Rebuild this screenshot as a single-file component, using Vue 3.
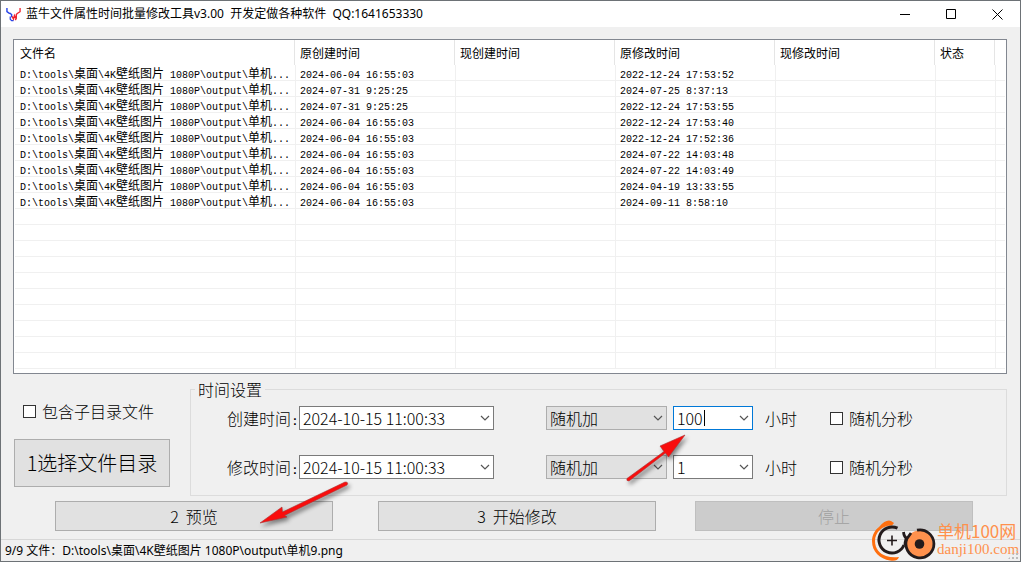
<script setup>
import { ref } from 'vue'

const columns = ['文件名', '原创建时间', '现创建时间', '原修改时间', '现修改时间', '状态', '']

const path = 'D:\\tools\\桌面\\4K壁纸图片 1080P\\output\\单机...'
const times = [
  ['2024-06-04 16:55:03', '2022-12-24 17:53:52'],
  ['2024-07-31 9:25:25', '2024-07-25 8:37:13'],
  ['2024-07-31 9:25:25', '2022-12-24 17:53:55'],
  ['2024-06-04 16:55:03', '2022-12-24 17:53:40'],
  ['2024-06-04 16:55:03', '2022-12-24 17:52:36'],
  ['2024-06-04 16:55:03', '2024-07-22 14:03:48'],
  ['2024-06-04 16:55:03', '2024-07-22 14:03:49'],
  ['2024-06-04 16:55:03', '2024-04-19 13:33:55'],
  ['2024-06-04 16:55:03', '2024-09-11 8:58:10'],
]
const files = times.map(([created, modified]) => [path, created, '', modified, '', '', ''])
const emptyRows = 10

const settings = ref([
  { id: 'created', label: '创建时间', date: '2024-10-15 11:00:33', mode: '随机加', hours: '100', active: true, random: false },
  { id: 'modified', label: '修改时间', date: '2024-10-15 11:00:33', mode: '随机加', hours: '1', active: false, random: false },
])
const includeSub = ref(false)

// Splits a string into Latin and Chinese runs so each gets its own face.
function runs(text) {
  return (text.match(/[\x00-\x7f]+|[^\x00-\x7f]+/g) || []).map((t) => ({
    text: t,
    latin: t.charCodeAt(0) < 128,
  }))
}
</script>

<template>
  <div class="window">
    <header class="titlebar">
      <svg class="logo" viewBox="0 0 16 16" aria-hidden="true">
        <path d="M1 1v4l3 2M4 6.500l2 1.500v3" fill="none" stroke="#2743e8" stroke-width="1.5" />
        <path d="M15 1v4l-3 2-1 1v4l-1 2M6.500 10l1.500 3 1-4 2 4" fill="none" stroke="#f0202c" stroke-width="1.4" />
        <path d="M4.500 10v3l1.500 1.500h2" fill="none" stroke="#2743e8" stroke-width="1.3" />
      </svg>
      <h1>蓝牛文件属性时间批量修改工具v3.00&nbsp; 开发定做各种软件&nbsp; QQ:1641653330</h1>
      <div class="controls">
        <button aria-label="最小化"><svg viewBox="0 0 11 11"><path d="M0 5.5h10" /></svg></button>
        <button aria-label="最大化"><svg viewBox="0 0 11 11"><path d="M.5.5h9v9h-9z" /></svg></button>
        <button aria-label="关闭"><svg viewBox="0 0 11 11"><path d="M.5.5l10 10M10.5.5l-10 10" /></svg></button>
      </div>
    </header>

    <main>
      <div class="list">
        <table>
          <colgroup>
            <col class="c-name" /><col class="c-time" /><col class="c-time" /><col class="c-time" />
            <col class="c-time" /><col class="c-state" /><col />
          </colgroup>
          <thead>
            <tr><th v-for="(c, i) in columns" :key="i">{{ c }}</th></tr>
          </thead>
          <tbody>
            <tr v-for="(row, r) in files" :key="r">
              <td v-for="(cell, c) in row" :key="c"><span v-for="(p, k) in runs(cell)" :key="k" :class="{ latin: p.latin }">{{ p.text }}</span></td>
            </tr>
            <tr v-for="n in emptyRows" :key="'e' + n">
              <td v-for="c in columns.length" :key="c"></td>
            </tr>
          </tbody>
        </table>
      </div>

      <div class="panel">
        <div class="source">
          <label class="check"><input v-model="includeSub" type="checkbox" />包含子目录文件</label>
          <button class="btn pick">1选择文件目录</button>
        </div>

        <fieldset>
          <legend>时间设置</legend>
          <div v-for="s in settings" :key="s.id" class="setting">
            <label class="name" :for="s.id + '-date'">{{ s.label }}<span class="latin">:</span></label>
            <div class="combo date">
              <input :id="s.id + '-date'" v-model="s.date" type="text" />
              <button :aria-label="s.label"><svg viewBox="0 0 10 6"><path d="M1 1l4 4 4-4" /></svg></button>
            </div>
            <div class="mode">
              <select v-model="s.mode" :aria-label="s.label + '方式'"><option>随机加</option></select>
              <svg viewBox="0 0 10 6"><path d="M1 1l4 4 4-4" /></svg>
            </div>
            <div class="combo hours" :class="{ active: s.active }">
              <input :id="s.id + '-hours'" v-model="s.hours" type="text" />
              <i v-if="s.active" class="caret"></i>
              <button aria-label="小时"><svg viewBox="0 0 10 6"><path d="M1 1l4 4 4-4" /></svg></button>
            </div>
            <label class="unit" :for="s.id + '-hours'">小时</label>
            <label class="check"><input v-model="s.random" type="checkbox" />随机分秒</label>
          </div>
          <svg class="arrow to-hours" viewBox="0 0 70 60" aria-hidden="true">
            <path d="M7 50.5L44 23.5 40 18 65 7 48.5 29 45.5 25 9 53Q6 53 7 50.5z" />
          </svg>
        </fieldset>
      </div>

      <div class="actions">
        <button class="btn">2&nbsp; 预览</button>
        <button class="btn">3&nbsp; 开始修改</button>
        <button class="btn" disabled>停止</button>
        <svg class="arrow to-preview" viewBox="0 0 100 55" aria-hidden="true">
          <path d="M5 48L27 32 27.5 37 90 7Q94 7 92 10L29.5 40.5 32 42z" />
        </svg>
      </div>
    </main>

    <footer>9/9 文件：D:\tools\桌面\4K壁纸图片 1080P\output\单机9.png</footer>

    <div class="brand">
      <svg viewBox="0 0 66 44" aria-hidden="true">
        <path d="M8 10Q15 2 20 4l3 2-2 2.500C12 8 4 15 4 24c0 8 5 13 11 15q6 2 13 1-2 5-9 3.500C9 42 1 35 1 24 1 18 4 13 8 10z" fill="#ff6f0f" />
        <path d="M26.500 11.200A13 13 0 1 0 33 28" fill="none" stroke="#231b1c" stroke-width="3" />
        <path d="M16 23.500h10M21 18.500v10" stroke="#231b1c" stroke-width="1.6" />
        <circle cx="48.500" cy="27" r="13.500" fill="#ff914d" />
        <path d="M46 13.200A14 14 0 1 1 36 21.500Q33 20 32.500 15M35 23l5-7M35 22q-1 3-1 6" fill="none" stroke="#231b1c" stroke-width="2.800" />
        <circle cx="48.500" cy="27" r="4.800" fill="#231b1c" />
      </svg>
      <div class="brand-text"><strong>单机100网</strong><span>danji100.com</span></div>
    </div>
    <i class="grip"></i>
  </div>
</template>

<style>
body { margin: 0; background: #f0f0f0; }
</style>

<style scoped>
* { box-sizing: border-box; }
.window {
  position: relative;
  display: flex;
  flex-direction: column;
  min-height: 100vh;
  border: 1px solid #6d7276;
  background: #f0f0f0;
  color: #000;
  font-family: "Noto Sans", "Noto Sans CJK SC", sans-serif;
  font-size: 12px;
  overflow: hidden;
}
button, input, select { font: inherit; color: inherit; margin: 0; }
.latin { font-family: "DejaVu Sans Mono", monospace; line-height: 0; }

.titlebar { display: flex; align-items: center; height: 26px; padding-left: 5px; background: #fff; }
.logo { width: 15px; height: 15px; margin-right: 5px; }
h1 { flex: 1; margin: 0; font-size: 12px; font-weight: 400; line-height: 26px; white-space: nowrap; }
.controls { display: flex; }
.controls button { width: 46px; height: 26px; padding: 0; border: 0; background: none; display: grid; place-items: center; }
.controls svg { width: 11px; height: 11px; fill: none; stroke: #000; }

main { flex: 1; padding: 12px 13px 0 12px; font-family: "Noto Sans CJK SC", sans-serif; font-size: 16px; font-weight: 300; }
.list { border: 1px solid #828790; background: #fff; padding: 0 1px 4px; font-weight: 400; }
table { width: 100%; table-layout: fixed; border-collapse: separate; border-spacing: 0; font-size: 12px; }
.c-name { width: 280px; }
.c-time { width: 160px; }
.c-state { width: 60px; }
th { height: 25px; padding: 0 0 0 5px; border-right: 1px solid #e5e5e5; font-weight: 400; text-align: left; line-height: 16px; }
th:last-child { border-right: 0; }
td { height: 16px; padding: 0 0 0 4px; border-bottom: 1px solid #f0f0f0; line-height: 15px; white-space: nowrap; overflow: hidden; }
td:first-child { padding-left: 5px; }
td + td { border-left: 1px solid #f0f0f0; }
td .latin { font-family: "Liberation Mono", monospace; font-size: 10px; white-space: pre; }

.panel { display: grid; grid-template-columns: 177px 1fr; margin-top: 6px; }
.source { padding: 19px 20px 0 1px; }
.source .check { margin-left: 9px; }
.check { display: flex; align-items: center; gap: 6px; line-height: 24px; white-space: nowrap; }
.check input { appearance: none; width: 13px; height: 13px; border: 1px solid #333; background: #fff; }
.check input:checked { background: #0078d7; }
.btn { border: 1px solid #adadad; background: #e1e1e1; padding: 0; line-height: 24px; white-space: nowrap; }
.btn:disabled { border-color: #bfbfbf; background: #ccc; color: #a0a0a0; }
.pick { display: block; width: 100%; height: 48px; margin-top: 16px; font-size: 20px; }

fieldset { position: relative; min-width: 0; margin: 0; padding: 8px 4px 16px; border: 1px solid #dcdcdc; }
legend { padding: 0 3px; line-height: 18px; }
.setting { display: flex; align-items: center; height: 24px; padding-left: 32px; }
.setting + .setting { margin-top: 25px; }
.name { width: 72px; line-height: 24px; white-space: nowrap; }
.name .latin { font-size: 13px; }
.combo { position: relative; display: flex; height: 24px; border: 1px solid #7a7a7a; background: #fff; }
.combo.active { border-color: #0078d7; }
.combo input { flex: 1; min-width: 0; padding: 0 0 0 3px; border: 0; outline: 0; background: none; line-height: 22px; }
.combo button { width: 17px; padding: 0; border: 0; background: none; display: grid; place-items: center; }
.combo svg, .mode svg { width: 10px; height: 6px; fill: none; stroke: #555; stroke-width: 1.2; }
.date { width: 195px; margin-right: 52px; }
.mode { position: relative; width: 121px; margin-right: 6px; }
.mode select { display: block; appearance: none; width: 100%; height: 24px; padding: 0 0 0 3px; border: 1px solid #adadad; border-radius: 0; background: #e1e1e1; line-height: 22px; }
.mode svg { position: absolute; right: 4px; top: 9px; pointer-events: none; }
.hours { width: 80px; margin-right: 12px; }
.caret { position: absolute; left: 30px; top: 3px; width: 1px; height: 16px; background: #000; }
.unit { margin-right: 33px; line-height: 24px; }

.actions { position: relative; display: grid; grid-template-columns: 278fr 45fr 278fr 39fr 278fr; height: 30px; margin: 5px 34px 0 42px; }
.actions .btn { height: 30px; }
.actions .btn:nth-of-type(2) { grid-column: 3; }
.actions .btn:nth-of-type(3) { grid-column: 5; }

.arrow { position: absolute; overflow: visible; fill: #f90d0d; stroke: #a33; stroke-width: .6; pointer-events: none; filter: drop-shadow(2px 3px 2px rgba(0, 0, 0, .45)); }
.to-hours { left: 429px; top: 30px; width: 70px; height: 60px; }
.to-preview { left: 200px; top: -26px; width: 100px; height: 55px; }

footer { height: 22px; margin-top: 7px; padding-left: 4px; border-top: 1px solid #d7d7d7; line-height: 21px; white-space: nowrap; }

.brand { position: absolute; right: 2px; bottom: 0; display: flex; align-items: center; color: #ff914d; }
.brand svg { width: 66px; height: 44px; }
.brand-text { display: flex; flex-direction: column; width: 81px; }
.brand strong { font-family: "Noto Sans CJK SC", sans-serif; font-size: 17px; font-weight: 400; line-height: 20px; white-space: nowrap; }
.brand span { font-family: "Liberation Serif", serif; font-size: 15px; line-height: 16px; }
.grip { position: absolute; right: 2px; bottom: 2px; width: 10px; height: 10px; background: radial-gradient(circle at 1px 1px, #bbb 1px, transparent 1px) 0 0 / 4px 4px; clip-path: polygon(100% 0, 100% 100%, 0 100%); }
</style>
